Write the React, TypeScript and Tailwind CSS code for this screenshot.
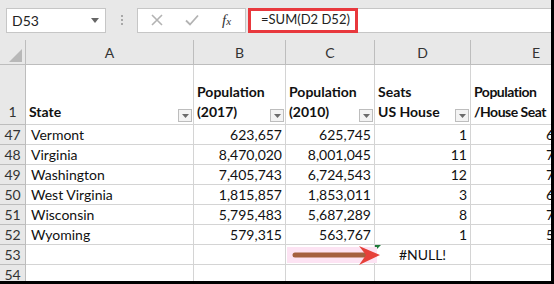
import React from "react";

const font = "font-['Lato','Liberation_Sans',sans-serif]";

const rows: [number, string, string, string, string, string][] = [
  [47, "Vermont", "623,657", "625,745", "1", "623,657"],
  [48, "Virginia", "8,470,020", "8,001,045", "11", "770,002"],
  [49, "Washington", "7,405,743", "6,724,543", "12", "740,574"],
  [50, "West Virginia", "1,815,857", "1,853,011", "3", "605,286"],
  [51, "Wisconsin", "5,795,483", "5,687,289", "8", "724,435"],
  [52, "Wyoming", "579,315", "563,767", "1", "579,315"],
];

const cols = "grid grid-cols-[26px_168px_92px_89px_96px_131px]";

function FilterBtn() {
  return (
    <span className="flex h-[13px] w-[14px] shrink-0 items-center justify-center border border-[#bdbdbd] bg-[#f3f3f3]">
      <svg width="7" height="4" viewBox="0 0 7 4">
        <path d="M0 0h7L3.5 4z" fill="#6b6b6b" />
      </svg>
    </span>
  );
}

function HeadCell({ lines, tight = false }: { lines: string[]; tight?: boolean }) {
  return (
    <div className="flex items-end justify-between border-b border-r border-[#d4d4d4] pb-[2px] pl-[3px] pr-[1px]">
      <div className={`flex flex-col text-[14px] font-bold leading-[20px] text-[#111] ${tight ? "tracking-[-0.5px]" : ""}`}>
        {lines.map((l) => (
          <span key={l} className="whitespace-nowrap">
            {l}
          </span>
        ))}
      </div>
      <FilterBtn />
    </div>
  );
}

export default function App() {
  return (
    <div className={`relative h-[284px] w-[554px] overflow-hidden border-b-[3px] border-r-[3px] border-black bg-white ${font}`}>
      {/* formula bar */}
      <div className="flex h-[40px] items-center bg-[#e8e8e8] pl-[6px]">
        <div className="flex h-[25px] w-[100px] items-center justify-between border border-[#c6c6c6] bg-white pl-[5px] pr-[6px] text-[14px] text-[#222]">
          <span>D53</span>
          <svg width="8" height="5" viewBox="0 0 8 5">
            <path d="M0 0h8L4 5z" fill="#666" />
          </svg>
        </div>
        <div className="flex w-[31px] flex-col items-center gap-[2px]">
          <span className="h-[2px] w-[2px] bg-[#a8a8a8]" />
          <span className="h-[2px] w-[2px] bg-[#a8a8a8]" />
          <span className="h-[2px] w-[2px] bg-[#a8a8a8]" />
        </div>
        <div className="flex h-[25px] w-[109px] items-center border border-[#c6c6c6] bg-white pl-[13px]">
          <svg width="12" height="12" viewBox="0 0 12 12" className="mr-[22px]">
            <path d="M1 1l10 10M11 1L1 11" stroke="#b3b3b3" strokeWidth="1.6" />
          </svg>
          <svg width="14" height="12" viewBox="0 0 14 12" className="mr-[23px]">
            <path d="M1 6.5l4 4L13 1.5" stroke="#b3b3b3" strokeWidth="1.8" fill="none" />
          </svg>
          <span className="font-['Liberation_Serif',serif] text-[15px] italic leading-none text-[#333]">
            f<span className="text-[11px]">x</span>
          </span>
        </div>
        <div className="ml-[2px] flex h-[25px] flex-1 items-center border-y border-[#c6c6c6] bg-white">
          <div className="flex h-[25px] w-[110px] shrink-0 items-center whitespace-nowrap border-[3px] border-[#e8383d] pl-[10px] text-[13px] text-[#222]">
            =SUM(D2 D52)
          </div>
        </div>
      </div>

      {/* sheet */}
      <div className="relative">
        <div className={`${cols} h-[25px] bg-[#e8e8e8] text-[14px] text-[#333]`}>
          <div className="relative border-b border-r border-[#bdbdbd]">
            <svg width="13" height="13" viewBox="0 0 13 13" className="absolute left-[9px] top-[9px]">
              <path d="M13 0V13H0z" fill="#b8b8b8" />
            </svg>
          </div>
          {["A", "B", "C", "D", "E"].map((c) => (
            <div key={c} className="flex items-center justify-center border-b border-r border-[#bdbdbd]">
              {c}
            </div>
          ))}
        </div>

        <div className={`${cols} h-[60px]`}>
          <div className="flex items-end justify-center border-b border-r border-[#bdbdbd] bg-[#e8e8e8] pb-[2px] text-[14px] text-[#333]">
            1
          </div>
          <HeadCell lines={["State"]} />
          <HeadCell lines={["Population", "(2017)"]} />
          <HeadCell lines={["Population", "(2010)"]} />
          <HeadCell lines={["Seats", "US House"]} />
          <HeadCell lines={["Population", "/House Seat"]} tight />
        </div>

        {rows.map(([n, st, b, c, d, e]) => (
          <div key={n} className={`${cols} h-[20px] text-[14px] leading-[19px] text-[#111]`}>
            <div className="flex justify-center border-b border-r border-[#bdbdbd] bg-[#e8e8e8] text-[#333]">{n}</div>
            <div className="border-b border-r border-[#d4d4d4] pl-[5px]">{st}</div>
            <div className="border-b border-r border-[#d4d4d4] pr-[3px] text-right">{b}</div>
            <div className="border-b border-r border-[#d4d4d4] pr-[3px] text-right">{c}</div>
            <div className="border-b border-r border-[#d4d4d4] pr-[3px] text-right">{d}</div>
            <div className="border-b border-r border-[#d4d4d4] pr-[3px] text-right">{e}</div>
          </div>
        ))}

        {[53, 54].map((n) => (
          <div key={n} className={`${cols} h-[20px] text-[14px] leading-[19px] text-[#111]`}>
            <div className="flex justify-center border-b border-r border-[#bdbdbd] bg-[#e8e8e8] text-[#333]">{n}</div>
            <div className="border-b border-r border-[#d4d4d4]" />
            <div className="border-b border-r border-[#d4d4d4]" />
            <div className="border-b border-r border-[#d4d4d4]" />
            <div className="relative border-b border-r border-[#d4d4d4] text-center">
              {n === 53 && (
                <>
                  <svg width="6" height="6" viewBox="0 0 6 6" className="absolute left-0 top-0">
                    <path d="M0 0h6L0 6z" fill="#1e7b3a" />
                  </svg>
                  #NULL!
                </>
              )}
            </div>
            <div className="border-b border-r border-[#d4d4d4]" />
          </div>
        ))}

        {/* annotation arrow */}
        <svg width="96" height="22" viewBox="0 0 96 22" className="absolute left-[286px] top-[205px]">
          <rect x="1" y="2" width="90" height="16" fill="#fde3f3" />
          <line x1="9" y1="10" x2="80" y2="10" stroke="#a5603f" strokeWidth="5" strokeLinecap="round" />
          <path d="M73 1L94 10L73 20L80 10z" fill="#e6403a" />
        </svg>
      </div>
    </div>
  );
}
